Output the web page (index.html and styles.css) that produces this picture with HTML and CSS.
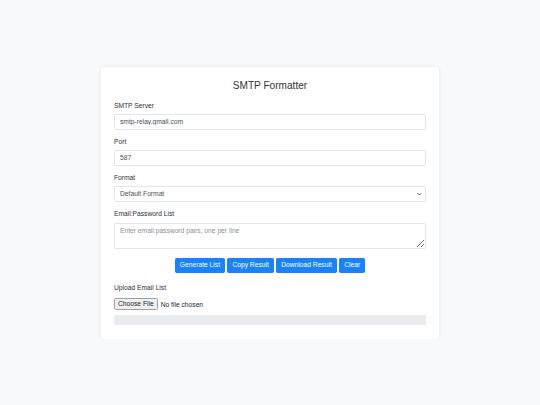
FILE: index.html
```html
<!DOCTYPE html>
<html lang="en">
<head>
<meta charset="utf-8">
<title>SMTP Formatter</title>
<link rel="stylesheet" href="styles.css">
</head>
<body>
<div class="card">
  <h2 class="title">SMTP Formatter</h2>
  <div class="group">
    <label class="label" for="server">SMTP Server</label>
    <input class="control" id="server" type="text" value="smtp-relay.gmail.com">
  </div>
  <div class="group">
    <label class="label" for="port">Port</label>
    <input class="control" id="port" type="text" value="587">
  </div>
  <div class="group">
    <label class="label" for="format">Format</label>
    <div class="select-wrap">
      <select class="control select" id="format">
        <option>Default Format</option>
      </select>
      <svg class="chev" width="5" height="4" viewBox="0 0 5 4" aria-hidden="true"><path d="M0.6 1.1 L2.5 3 L4.4 1.1" fill="none" stroke="#666" stroke-width="1"/></svg>
    </div>
  </div>
  <div class="group last">
    <label class="label" for="list">Email:Password List</label>
    <textarea class="control area" id="list" placeholder="Enter email:password pairs, one per line"></textarea>
  </div>
  <div class="actions">
    <button class="btn" type="button">Generate List</button>
    <button class="btn" type="button">Copy Result</button>
    <button class="btn" type="button">Download Result</button>
    <button class="btn" type="button">Clear</button>
  </div>
  <div class="upload">
    <label class="label" for="file">Upload Email List</label>
    <input class="file" id="file" type="file">
  </div>
  <div class="progress"></div>
</div>
</body>
</html>
```

FILE: styles.css
```css
* { box-sizing: border-box; }
html, body { margin: 0; padding: 0; }
body {
  background: #f8f9fa;
  font-family: "Liberation Sans", Arial, Helvetica, sans-serif;
  color: #2b2f33;
  font-size: 6.7px;
  line-height: 10px;
}
.card {
  width: 338px;
  margin: 67px auto 0;
  background: #fff;
  border-radius: 3px;
  box-shadow: 0 0 4px rgba(0, 0, 0, 0.08);
  padding: 13px 13px 13.6px;
}
.title {
  margin: 0 0 8.5px;
  text-align: center;
  font-size: 10.1px;
  line-height: 12px;
  font-weight: 400;
  color: #333;
}
.group { margin-bottom: 7.2px; }
.group.last { margin-bottom: 0; }
.label {
  display: block;
  margin-bottom: 3.5px;
  font-size: 6.7px;
  line-height: 10px;
}
.control {
  display: block;
  width: 100%;
  height: 15.5px;
  padding: 2.5px 5px;
  font-family: inherit;
  font-size: 6.7px;
  line-height: 10px;
  color: #495057;
  background: #fff;
  border: 1px solid #e3e6e9;
  border-radius: 1.7px;
  margin: 0;
  outline: none;
}
.select-wrap { position: relative; }
.select {
  appearance: none;
  -webkit-appearance: none;
  padding: 2px 5px;
}
.chev {
  position: absolute;
  right: 4px;
  top: 6px;
}
.area {
  height: 26px;
  resize: vertical;
}
.area::placeholder { color: #8a9096; }
.actions {
  display: flex;
  justify-content: center;
  gap: 2px;
  margin-top: 9px;
}
.btn {
  font-family: inherit;
  font-size: 6.7px;
  line-height: 10px;
  height: 15px;
  padding: 2px 5.2px;
  color: #fff;
  background: #1a82fb;
  border: 0;
  border-radius: 1.7px;
  margin: 0;
}
.upload { margin-top: 10px; }
.upload .label { margin-bottom: 5px; }
.file {
  display: block;
  font-family: inherit;
  font-size: 6.7px;
  color: #212529;
  margin: 0;
  height: 12px;
  line-height: 12px;
  padding: 0;
}
.file::file-selector-button {
  font-family: inherit;
  font-size: 6.7px;
  height: 12px;
  padding: 0 3px;
  margin-right: 3px;
  color: #212529;
  background: #efefef;
  border: 1px solid #a0a0a0;
  border-radius: 1.5px;
}
.progress {
  margin-top: 5.7px;
  height: 9.7px;
  background: #e9ecef;
  border-radius: 2px;
}
```
